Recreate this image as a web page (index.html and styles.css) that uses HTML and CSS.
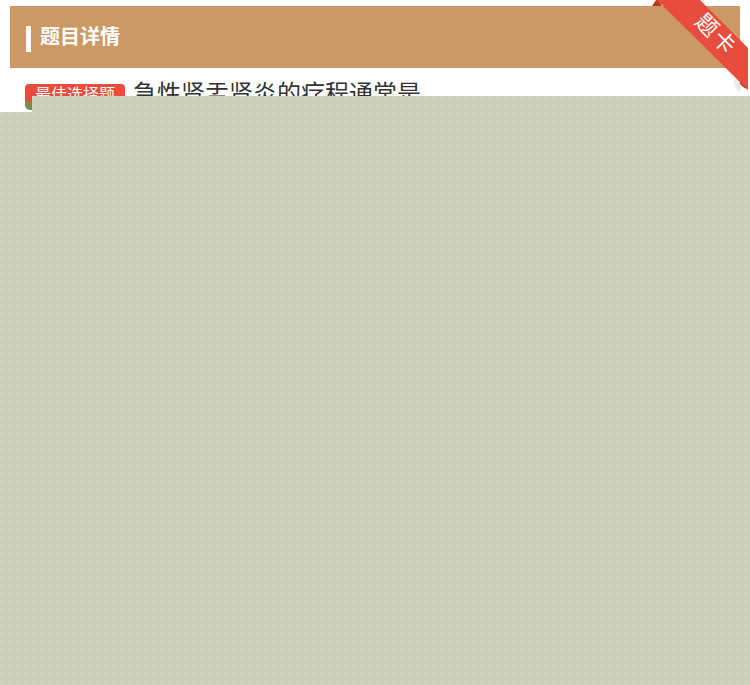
FILE: index.html
```html
<!DOCTYPE html>
<html lang="zh-CN">
<head>
<meta charset="utf-8">
<title>题目详情</title>
<link rel="stylesheet" href="styles.css">
</head>
<body>
<div class="page">
  <header class="head">
    <span class="head-bar"></span>
    <h1 class="head-title">题目详情</h1>
  </header>
  <section class="question">
    <div class="q-row">
      <span class="badge">最佳选择题</span>
      <span class="q-text">急性肾盂肾炎的疗程通常是</span>
    </div>
    <div class="q-next"><span class="olive"></span></div>
  </section>

  <div class="ribbon">
    <svg class="ribbon-svg" width="100" height="95" viewBox="0 0 100 95">
      <defs>
        <linearGradient id="sh" x1="0" y1="0" x2="1" y2="0">
          <stop offset="0" stop-color="#000" stop-opacity="0"/>
          <stop offset="1" stop-color="#000" stop-opacity="0.12"/>
        </linearGradient>
      </defs>
      <polygon points="6,0 9,0 12,6 2,6" fill="#b8362a"/>
      <polygon points="80,70 90,66 90,92 84,86" fill="url(#sh)"/>
      <path d="M90,66 L98,70 L98,88 Q96,90 92,86 L90,84 Z" fill="#c0392b"/>
      <polygon points="7,0 50,0 98,48 98,90" fill="#e84c3d"/>
    </svg>
    <span class="ribbon-text">题卡</span>
  </div>

  <div class="mask mask-a"></div>
  <div class="mask mask-b"></div>
</div>
</body>
</html>
```

FILE: styles.css
```css
html, body {
  margin: 0;
  padding: 0;
  background: #ffffff;
}
body {
  font-family: "Noto Sans CJK SC", "Liberation Sans", sans-serif;
}
.page {
  position: relative;
  width: 750px;
  height: 685px;
  overflow: hidden;
  padding-top: 6px;
  box-sizing: border-box;
}
.head {
  margin: 0 10px;
  height: 62px;
  background: #cc9966;
  display: flex;
  align-items: center;
  padding-left: 16px;
  gap: 9px;
}
.head-bar {
  width: 5px;
  height: 26px;
  background: #ffffff;
  margin-top: 4px;
}
.head-title {
  margin: 0 0 3px;
  font-size: 20px;
  font-weight: bold;
  color: #ffffff;
  line-height: 1;
}
.question {
  padding: 10px 0 0 25px;
}
.q-row {
  display: flex;
  align-items: flex-start;
  gap: 8px;
}
.badge {
  margin-top: 6px;
  background: #e84c3d;
  color: #ffffff;
  font-size: 16px;
  line-height: 18px;
  padding: 0 10px;
  border-radius: 4px;
  width: 80px;
  text-align: center;
  white-space: nowrap;
}
.q-text {
  font-size: 24px;
  line-height: 28px;
  color: #333333;
}
.q-next {
  margin-top: -8px;
}
.olive {
  display: block;
  width: 14px;
  height: 12px;
  background: #7d8b50;
  border-radius: 0 0 0 5px;
}
.ribbon {
  position: absolute;
  left: 650px;
  top: 0;
  width: 100px;
  height: 95px;
}
.ribbon-svg {
  display: block;
}
.ribbon-text {
  position: absolute;
  left: 37px;
  top: 20px;
  width: 60px;
  height: 24px;
  text-align: center;
  font-size: 22px;
  line-height: 24px;
  color: #ffffff;
  letter-spacing: 2px;
  text-indent: 2px;
  transform: rotate(45deg);
  transform-origin: 30px 12px;
  white-space: nowrap;
}
.mask {
  position: absolute;
  right: 0;
  bottom: 0;
  background-color: #cccfba;
  background-image: radial-gradient(circle at 2px 2px, #d9dbcb 0.8px, transparent 1.2px);
  background-size: 8px 8px;
}
.mask-a {
  left: 32px;
  top: 96px;
}
.mask-b {
  left: 0;
  top: 112px;
}
```
